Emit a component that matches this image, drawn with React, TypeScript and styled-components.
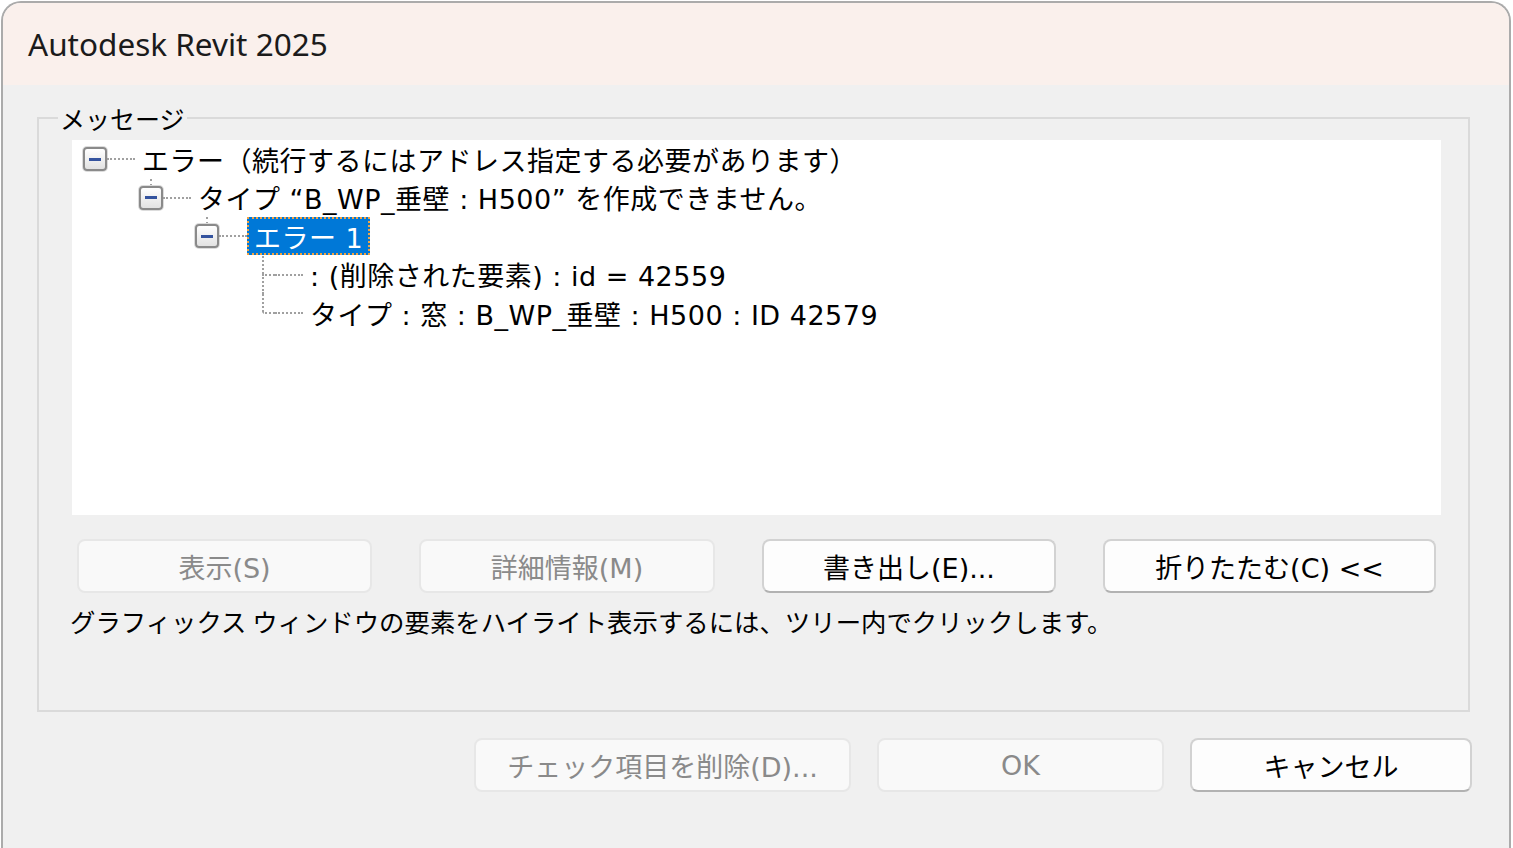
import React from "react";
import styled, { createGlobalStyle } from "styled-components";

const JP = `"Noto Sans CJK JP", "Noto Sans", sans-serif`;
const MIX = `"DejaVu Sans", "Noto Sans CJK JP", sans-serif`;
const LINE = "#a0a0a0";

const GlobalStyle = createGlobalStyle`
  html, body { margin: 0; padding: 0; background: #ffffff; overflow: hidden; }
  body { font-family: ${JP}; }
  #root { height: 100vh; }
`;

const Window = styled.div`
  box-sizing: border-box;
  margin: 1px 2px 0 1px;
  height: calc(100vh - 1px);
  border: 2px solid #ababab;
  border-bottom: none;
  border-radius: 20px 20px 0 0;
  background: #f0f0f0;
  overflow: hidden;
  display: flex;
  flex-direction: column;
`;

const TitleBar = styled.div`
  height: 82px;
  flex: 0 0 82px;
  background: #faf0ec;
  display: flex;
  align-items: center;
  padding: 0 0 2px 25px;
  box-sizing: border-box;
  font-family: "Noto Sans", "Open Sans", sans-serif;
  font-size: 31.5px;
  color: #1b1b1b;
`;

const Content = styled.div`
  flex: 1;
  display: flex;
  flex-direction: column;
`;

const GroupBox = styled.fieldset`
  margin: 17px 39px 0 34px;
  padding: 0 0 73px 0;
  border: 2px solid #dadada;
  min-width: 0;
  display: flex;
  flex-direction: column;
`;

const Legend = styled.legend`
  margin-left: 19px;
  padding: 0 2px;
  font-family: ${JP};
  font-size: 25px;
  line-height: 32px;
  color: #000;
`;

const Tree = styled.div`
  margin: 6px 27px 0 33px;
  height: 375px;
  background: #ffffff;
  box-sizing: border-box;
  display: flex;
  flex-direction: column;
`;

const Row = styled.div<{ $depth: number }>`
  height: 38.5px;
  flex: 0 0 38.5px;
  display: flex;
  align-items: stretch;
  padding-left: ${(p) => 11 + p.$depth * 56}px;
`;

const Slot = styled.div`
  width: 24px;
  flex: 0 0 24px;
  display: flex;
  flex-direction: column;
`;

const VStub = styled.div<{ $on: boolean }>`
  flex: 1;
  margin-left: 11px;
  width: 0;
  border-left: 2px dotted ${(p) => (p.$on ? LINE : "transparent")};
`;

const LeafLower = styled.div<{ $down: boolean }>`
  flex: 1;
  margin-left: 11px;
  border-top: 2px dotted ${LINE};
  border-left: 2px dotted ${(p) => (p.$down ? LINE : "transparent")};
`;

const Expander = styled.div`
  box-sizing: border-box;
  width: 24px;
  height: 24px;
  flex: 0 0 24px;
  border: 2px solid #8a8a8a;
  border-radius: 4px;
  background: linear-gradient(#ffffff, #e2e2e2);
  box-shadow: 0 0 0 1px #dcdcdc;
  display: flex;
  align-items: center;
  justify-content: center;
`;

const Minus = styled.div`
  width: 12px;
  height: 3px;
  background: #34539e;
`;

const Connector = styled.div`
  width: 28px;
  flex: 0 0 28px;
  align-self: center;
  height: 0;
  border-top: 2px dotted ${LINE};
`;

const Label = styled.div<{ $selected?: boolean }>`
  box-sizing: border-box;
  align-self: center;
  height: 38px;
  display: flex;
  align-items: center;
  padding: 0 5px;
  white-space: pre;
  font-family: ${MIX};
  font-size: 27px;
  letter-spacing: 0.5px;
  color: ${(p) => (p.$selected ? "#ffffff" : "#000000")};
  background: ${(p) => (p.$selected ? "#0078d7" : "transparent")};
  border: 2px ${(p) => (p.$selected ? "dotted #f4a23f" : "solid transparent")};
`;

const ButtonRow = styled.div`
  display: flex;
  gap: 47px;
  margin: 24px 0 0 38px;
`;

const Button = styled.button<{ $width: number }>`
  box-sizing: border-box;
  width: ${(p) => p.$width}px;
  height: 54px;
  border-radius: 8px;
  border: 2px solid #d2d2d2;
  border-bottom-color: #b2b2b2;
  background: #fdfdfd;
  color: #000;
  font-family: ${MIX};
  font-size: 27px;
  padding: 0;
  display: flex;
  align-items: center;
  justify-content: center;

  &:disabled {
    background: #f9f9f9;
    border-color: #e7e7e7;
    color: #8a8a8a;
  }
`;

const Hint = styled.div`
  margin: 12px 0 0 31px;
  line-height: 32px;
  font-family: ${JP};
  font-size: 25.4px;
  color: #000;
`;

const Footer = styled.div`
  display: flex;
  justify-content: flex-end;
  gap: 26px;
  margin-top: 26px;
  padding-right: 37px;
`;

type TreeRow =
  | { kind: "node"; depth: number; up: boolean; text: string; selected?: boolean }
  | { kind: "leaf"; depth: number; down: boolean; text: string };

const rows: TreeRow[] = [
  { kind: "node", depth: 0, up: false, text: "エラー（続行するにはアドレス指定する必要があります）" },
  { kind: "node", depth: 1, up: true, text: "タイプ “B_WP_垂壁 : H500” を作成できません。" },
  { kind: "node", depth: 2, up: true, text: "エラー 1", selected: true },
  { kind: "leaf", depth: 3, down: true, text: ": (削除された要素) : id = 42559" },
  { kind: "leaf", depth: 3, down: false, text: "タイプ : 窓 : B_WP_垂壁 : H500 : ID 42579" },
];

export default function App() {
  return (
    <>
      <GlobalStyle />
      <Window>
        <TitleBar>Autodesk Revit 2025</TitleBar>
        <Content>
          <GroupBox>
            <Legend>メッセージ</Legend>
            <Tree>
              {rows.map((r, i) => (
                <Row key={i} $depth={r.depth}>
                  {r.kind === "node" ? (
                    <Slot>
                      <VStub $on={r.up} />
                      <Expander>
                        <Minus />
                      </Expander>
                      <VStub $on={false} />
                    </Slot>
                  ) : (
                    <Slot>
                      <VStub $on={true} />
                      <LeafLower $down={r.down} />
                    </Slot>
                  )}
                  <Connector />
                  <Label $selected={r.kind === "node" ? r.selected : false}>{r.text}</Label>
                </Row>
              ))}
            </Tree>
            <ButtonRow>
              <Button $width={295} disabled>表示(S)</Button>
              <Button $width={296} disabled>詳細情報(M)</Button>
              <Button $width={294}>書き出し(E)...</Button>
              <Button $width={333}>折りたたむ(C) &lt;&lt;</Button>
            </ButtonRow>
            <Hint>グラフィックス ウィンドウの要素をハイライト表示するには、ツリー内でクリックします。</Hint>
          </GroupBox>
          <Footer>
            <Button $width={377} disabled>チェック項目を削除(D)...</Button>
            <Button $width={287} disabled>OK</Button>
            <Button $width={282}>キャンセル</Button>
          </Footer>
        </Content>
      </Window>
    </>
  );
}
